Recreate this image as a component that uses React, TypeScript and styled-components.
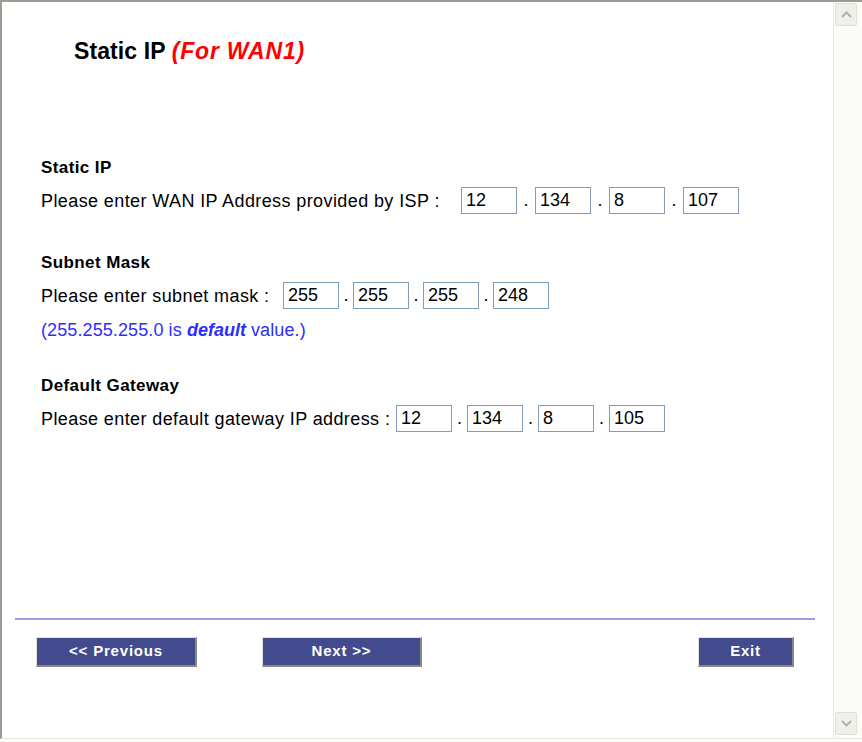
import { createGlobalStyle } from 'styled-components';
import styled from 'styled-components';

const GlobalStyle = createGlobalStyle`
  body {
    margin: 0;
    background: #fdfdfb;
    font-family: "Liberation Sans", Arial, sans-serif;
  }
`;

const Frame = styled.div`
  width: 862px;
  height: 739px;
  box-sizing: border-box;
  display: flex;
  background: #ffffff;
  border-top: 2px solid #9d9b93;
  border-left: 2px solid #9d9b93;
  border-bottom: 1px solid #e8e7de;
`;

const Content = styled.div`
  flex: 1;
  display: flex;
  flex-direction: column;
  color: #000;
`;

const Main = styled.div`
  padding-left: 39px;
  display: flex;
  flex-direction: column;
`;

const Title = styled.h1`
  margin: 38px 0 0 33px;
  font-size: 23px;
  line-height: 23px;
  font-weight: bold;
  letter-spacing: 0.1px;
`;

const WanTag = styled.span`
  color: #ff0000;
  font-style: italic;
  letter-spacing: 0.8px;
`;

const SectionTitle = styled.div<{ $top: number }>`
  margin-top: ${(p) => p.$top}px;
  font-size: 17px;
  line-height: 20px;
  font-weight: bold;
  letter-spacing: 0.4px;
`;

const Row = styled.div`
  margin-top: 9px;
  display: flex;
  align-items: center;
  height: 27px;
`;

const Label = styled.span<{ $width: number }>`
  width: ${(p) => p.$width}px;
  flex-shrink: 0;
  font-size: 18px;
  line-height: 27px;
  letter-spacing: 0.4px;
  white-space: nowrap;
  padding-top: 2px;
`;

const Octet = styled.input`
  width: 56px;
  height: 27px;
  box-sizing: border-box;
  margin: 0;
  padding: 0 4px;
  border: 1px solid #7f9db9;
  font-family: "Liberation Sans", Arial, sans-serif;
  font-size: 18px;
  color: #000;
  background: #fff;
  outline: none;
`;

const Dot = styled.span<{ $gap: number }>`
  width: ${(p) => p.$gap}px;
  text-align: center;
  font-size: 18px;
  line-height: 27px;
  align-self: flex-end;
`;

const Note = styled.div`
  margin-top: 10px;
  font-size: 18px;
  line-height: 22px;
  letter-spacing: 0.1px;
  color: #2d2dff;

  b {
    font-style: italic;
    letter-spacing: 0;
  }
`;

const Footer = styled.div`
  margin: 186px 18px 0 13px;
  display: flex;
  flex-direction: column;
`;

const Rule = styled.div`
  height: 2px;
  background: #9c9ce4;
`;

const ButtonRow = styled.div`
  margin-top: 17px;
  padding-left: 21px;
  display: flex;
`;

const NavButton = styled.button<{ $width: number; $gap?: number }>`
  width: ${(p) => p.$width}px;
  height: 30px;
  margin-left: ${(p) => p.$gap ?? 0}px;
  box-sizing: border-box;
  background: #424b8d;
  color: #fff;
  font-family: "Liberation Sans", Arial, sans-serif;
  font-size: 15px;
  font-weight: bold;
  letter-spacing: 0.8px;
  padding: 0 0 2px;
  border-style: solid;
  border-width: 1px 2px 2px 1px;
  border-color: #e4e2da #8a8882 #8a8882 #e4e2da;
  cursor: pointer;
`;

const Scrollbar = styled.div`
  width: 29px;
  flex-shrink: 0;
  box-sizing: border-box;
  border-left: 1px solid #ebeae2;
  background: #fbfbf7;
  display: flex;
  flex-direction: column;
  justify-content: space-between;
  padding: 1px 4px 3px 1px;
`;

const ArrowButton = styled.div`
  width: 22px;
  height: 23px;
  box-sizing: border-box;
  border: 1px solid #e0dfd7;
  border-radius: 2px;
  background: #f0efe9;
  display: flex;
  align-items: center;
  justify-content: center;
`;

const Chevron = ({ up }: { up?: boolean }) => (
  <svg width="11" height="7" viewBox="0 0 11 7">
    <path
      d={up ? 'M1 6 L5.5 1.5 L10 6' : 'M1 1 L5.5 5.5 L10 1'}
      fill="none"
      stroke="#b2b1aa"
      strokeWidth="2"
    />
  </svg>
);

interface IpRowProps {
  label: string;
  labelWidth: number;
  gap: number;
  values: string[];
}

function IpRow({ label, labelWidth, gap, values }: IpRowProps) {
  return (
    <Row>
      <Label $width={labelWidth}>{label}</Label>
      {values.map((v, i) => (
        <span key={i} style={{ display: 'contents' }}>
          {i > 0 && <Dot $gap={gap}>.</Dot>}
          <Octet defaultValue={v} />
        </span>
      ))}
    </Row>
  );
}

export default function App() {
  return (
    <>
      <GlobalStyle />
      <Frame>
        <Content>
          <Main>
            <Title>
              Static IP <WanTag>(For WAN1)</WanTag>
            </Title>

            <SectionTitle $top={95}>Static IP</SectionTitle>
            <IpRow
              label="Please enter WAN IP Address provided by ISP :"
              labelWidth={420}
              gap={18}
              values={['12', '134', '8', '107']}
            />

            <SectionTitle $top={39}>Subnet Mask</SectionTitle>
            <IpRow
              label="Please enter subnet mask :"
              labelWidth={242}
              gap={14}
              values={['255', '255', '255', '248']}
            />
            <Note>
              (255.255.255.0 is <b>default</b> value.)
            </Note>

            <SectionTitle $top={35}>Default Gateway</SectionTitle>
            <IpRow
              label="Please enter default gateway IP address :"
              labelWidth={355}
              gap={15}
              values={['12', '134', '8', '105']}
            />
          </Main>

          <Footer>
            <Rule />
            <ButtonRow>
              <NavButton $width={161}>&lt;&lt; Previous</NavButton>
              <NavButton $width={160} $gap={65}>Next &gt;&gt;</NavButton>
              <NavButton $width={96} $gap={276}>Exit</NavButton>
            </ButtonRow>
          </Footer>
        </Content>

        <Scrollbar>
          <ArrowButton>
            <Chevron up />
          </ArrowButton>
          <ArrowButton>
            <Chevron />
          </ArrowButton>
        </Scrollbar>
      </Frame>
    </>
  );
}
